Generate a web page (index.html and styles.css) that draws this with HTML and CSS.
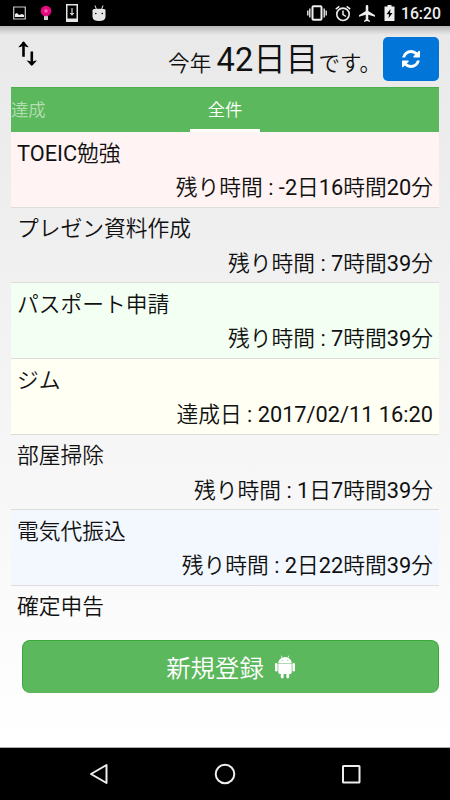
FILE: index.html
```html
<!DOCTYPE html>
<html lang="ja">
<head>
    <meta charset="UTF-8">
    <meta name="viewport" content="width=device-width, initial-scale=1.0">
    <title>タスク一覧</title>
    <link rel="stylesheet" href="styles.css">
</head>
<body>
    <div class="status-bar">
        <div class="status-left">
            <svg width="13" height="14" viewBox="0 0 13 14"><path d="M.7 1h11.6v12H.7z" fill="none" stroke="#ccc" stroke-width="1.2"/><path d="M2 11V8l2-1 2 2 3-1 2 1v2z" fill="#eee"/></svg>
            <svg width="12" height="16" viewBox="0 0 12 16"><path d="M4 10h4v5H4z" fill="#ccc"/><circle cx="6" cy="6" r="5.3" fill="#e5097f"/><circle cx="6" cy="6" r="1.8" fill="#f260ad"/></svg>
            <svg width="12" height="18" viewBox="0 0 12 18"><path fill="#e6e6e6" fill-rule="evenodd" d="M0 0h12v18H0zM1.5 1.500v13h9v-13z"/><path d="M6 4v7M4.200 9 6 11l1.800-2" fill="none" stroke="#e6e6e6" stroke-width="1.100"/></svg>
            <svg width="14" height="17" viewBox="0 0 14 17"><path d="m3 .5 1.500 4M11 .5l-1.500 4" stroke="#e6e6e6"/><path d="M.5 5Q.5 3.800 7 3.800T13.500 5v6.500Q13.500 16 7 16T.5 11.500z" fill="#e6e6e6"/><circle cx="3.800" cy="8.500" r=".8"/><circle cx="10.200" cy="8.500" r=".8"/></svg>
        </div>
        <div class="status-right">
            <svg width="20" height="16" viewBox="0 0 20 16" fill="none" stroke="#eee"><rect x="5.500" y="1.200" width="9" height="13.600" rx="1" stroke-width="2"/><path d="M2.800 3.500v9M17.200 3.500v9M.8 5.500v5M19.200 5.500v5" stroke-width="1.400"/></svg>
            <svg width="16" height="17" viewBox="0 0 16 17" fill="none" stroke="#eee"><circle cx="8" cy="9.300" r="6.200" stroke-width="1.600"/><path d="M.8 4.200 4.300 1.300M15.200 4.200 11.700 1.300M8 5.500v4l3 2" stroke-width="1.500"/></svg>
            <svg width="16" height="17" viewBox="2 2 19 20"><path fill="#eee" d="M21 16v-2l-8-5V3.500a1.500 1.500 0 0 0-3 0V9l-8 5v2l8-2.500V19l-2 1.500V22l3.500-1 3.500 1v-1.500L13 19v-5.500z"/></svg>
            <svg class="battery" width="11" height="16" viewBox="0 0 10 16"><path fill="#eee" d="M3 0h4v1.500h3V16H0V1.500h3z"/><path d="M6 4 2 9.200h2.600L4 13.200 8 8H5.500z"/></svg>
            <span class="clock">16:20</span>
        </div>
    </div>

    <div class="main">
        <div class="header">
            <svg class="sort" width="20" height="26" viewBox="0 0 20 26"><path d="M5.500 1.200v14.500M13.800 10.500V24" stroke="#000" stroke-width="2.600"/><path d="M.3 6.200 5.500.3l5.200 5.900-2.200-.3-3-1.500-3 1.500zM8.600 19.500l5.200 5.500 5.200-5.500-2.200.3-3 1.200-3-1.200z"/></svg>
            <p class="day">今年 <span class="day-count">42日目</span>です。</p>
            <button class="refresh">
                <svg width="18" height="18" viewBox="0 0 1536 1536"><path fill="#fff" d="M1511 928q0 5-1 7-64 268-268 434.500T764 1536q-146 0-282.500-55T238 1324l-129 129q-19 19-45 19t-45-19-19-45V960q0-26 19-45t45-19h448q26 0 45 19t19 45-19 45l-137 137q71 66 161 102t187 36q134 0 250-65t186-179q11-17 53-117 8-23 30-23h192q13 0 22.500 9.500t9.500 22.500zm25-800v448q0 26-19 45t-45 19h-448q-26 0-45-19t-19-45 19-45l138-138Q969 256 768 256q-134 0-250 65T332 500q-11 17-53 117-8 23-30 23H50q-13 0-22.500-9.500T18 608v-7q65-268 270-434.500T768 0q146 0 284 55.500T1297 212l130-129q19-19 45-19t45 19 19 45z"/></svg>
            </button>
        </div>

        <div class="tabs">
            <div class="tab tab-prev">達成</div>
            <div class="tab tab-active">全件</div>
        </div>

        <ul class="tasks">
            <li class="task red"><div class="name">TOEIC勉強</div><div class="time">残り時間 : -2日16時間20分</div></li>
            <li class="task"><div class="name">プレゼン資料作成</div><div class="time">残り時間 : 7時間39分</div></li>
            <li class="task green"><div class="name">パスポート申請</div><div class="time">残り時間 : 7時間39分</div></li>
            <li class="task yellow"><div class="name">ジム</div><div class="time">達成日 : 2017/02/11 16:20</div></li>
            <li class="task"><div class="name">部屋掃除</div><div class="time">残り時間 : 1日7時間39分</div></li>
            <li class="task blue"><div class="name">電気代振込</div><div class="time">残り時間 : 2日22時間39分</div></li>
            <li class="task"><div class="name">確定申告</div></li>
        </ul>

        <button class="create">
            <span>新規登録</span>
            <svg width="20" height="24" viewBox="0 0 20 24" fill="#fff"><path d="M3.300 8Q3.500 4.500 6.900 2.800L5.700.8l.6-.3 1.200 2q2.500-.9 5 0l1.200-2 .6.3-1.200 2Q16.500 4.500 16.700 8z"/><path d="M3.300 8.600h13.400v9q0 1.400-1.400 1.400h-1.100v3a1.400 1.400 0 0 1-2.800 0v-3H8.600v3a1.400 1.400 0 0 1-2.800 0v-3H4.700q-1.400 0-1.400-1.400z"/><rect x="0" y="8" width="2.600" height="8.500" rx="1.300"/><rect x="17.400" y="8" width="2.600" height="8.500" rx="1.300"/><circle cx="7.200" cy="5.300" r=".5" fill="#5cb85c"/><circle cx="12.800" cy="5.300" r=".5" fill="#5cb85c"/></svg>
        </button>
    </div>

    <div class="nav-bar">
        <svg width="20" height="22" viewBox="0 0 20 22"><path d="M17.500 2v18L2 11z"/></svg>
        <svg width="22" height="22" viewBox="0 0 22 22"><circle cx="11" cy="11" r="9.300"/></svg>
        <svg width="20" height="20" viewBox="0 0 20 20"><rect x="2" y="2" width="16.500" height="16.500" rx=".5"/></svg>
    </div>
</body>
</html>
```

FILE: styles.css
```css
* {
    box-sizing: border-box;
}
body {
    margin: 0;
    width: 450px;
    height: 800px;
    display: flex;
    flex-direction: column;
    overflow: hidden;
    background: #000;
    color: #111;
    font-family: Roboto, "Noto Sans CJK JP DemiLight", "Noto Sans CJK JP", sans-serif;
    font-weight: 400;
}
svg {
    display: block;
    flex: none;
}
button {
    border: none;
    padding: 0;
    font: inherit;
    display: flex;
    align-items: center;
    justify-content: center;
}
.status-bar {
    height: 26px;
    flex: none;
    display: flex;
    justify-content: space-between;
    align-items: center;
    padding: 0 9px 0 13px;
}
.status-left {
    display: flex;
    align-items: center;
    gap: 14px;
}
.status-right {
    display: flex;
    align-items: center;
    gap: 8px;
    color: #eee;
}
.battery {
    margin-left: 1px;
}
.clock {
    margin-left: -2px;
    font-size: 15.8px;
    font-weight: 500;
    line-height: 26px;
    padding-top: 2px;
}
.main {
    height: 722px;
    flex: none;
    padding: 0 11px;
    background: linear-gradient(rgba(0, 0, 0, 0.22), rgba(0, 0, 0, 0) 9px), linear-gradient(#e9e9e9, #fff);
    border-bottom: 1px solid #aaa;
}
.header {
    height: 61px;
    display: flex;
    padding-top: 11px;
}
.sort {
    margin: 4px 0 0 7px;
}
.day {
    flex: 1;
    margin: 1px 0 0;
    padding-right: 2px;
    text-align: right;
    font-size: 21.6px;
    line-height: 44px;
    white-space: nowrap;
}
.day-count {
    font-size: 32.6px;
}
.refresh {
    width: 56px;
    height: 44px;
    border-radius: 5px;
    background: #0275d8;
}
.tabs {
    height: 45px;
    display: grid;
    grid-template-columns: 179px 70px;
    background: #5cb85c;
    border-top: 1px solid #4cad4c;
    color: #fff;
    font-size: 17.3px;
    line-height: 44px;
}
.tab {
    height: 44px;
}
.tab-prev {
    color: #b5deb5;
}
.tab-active {
    text-align: center;
    border-bottom: 3px solid #fff;
}
.tasks {
    height: 508px;
    margin: 0;
    padding: 0;
    list-style: none;
    overflow: hidden;
    font-size: 21.75px;
}
.task {
    height: 75.65px;
    padding: 4.6px 6px 0;
    border-bottom: 1px solid #ddd;
}
.task:last-child {
    border-bottom: none;
}
.name, .time {
    height: 34.5px;
    line-height: 34.5px;
}
.time {
    text-align: right;
}
.red {
    background: #fff3f3;
}
.green {
    background: #f3fff3;
}
.yellow {
    background: #fffff3;
}
.blue {
    background: #f3f8ff;
}
.create {
    width: 417px;
    height: 53px;
    margin-left: 11px;
    gap: 11px;
    border: 1px solid #39a939;
    border-bottom-color: #5cb85c;
    border-radius: 8px;
    background: #5cb85c;
    color: #fff;
    font-size: 24.4px;
}
.nav-bar {
    flex: 1;
    display: flex;
    justify-content: space-between;
    align-items: center;
    padding: 0 89px;
}
.nav-bar svg {
    fill: none;
    stroke: #eee;
    stroke-width: 2;
    stroke-linejoin: round;
}
```
